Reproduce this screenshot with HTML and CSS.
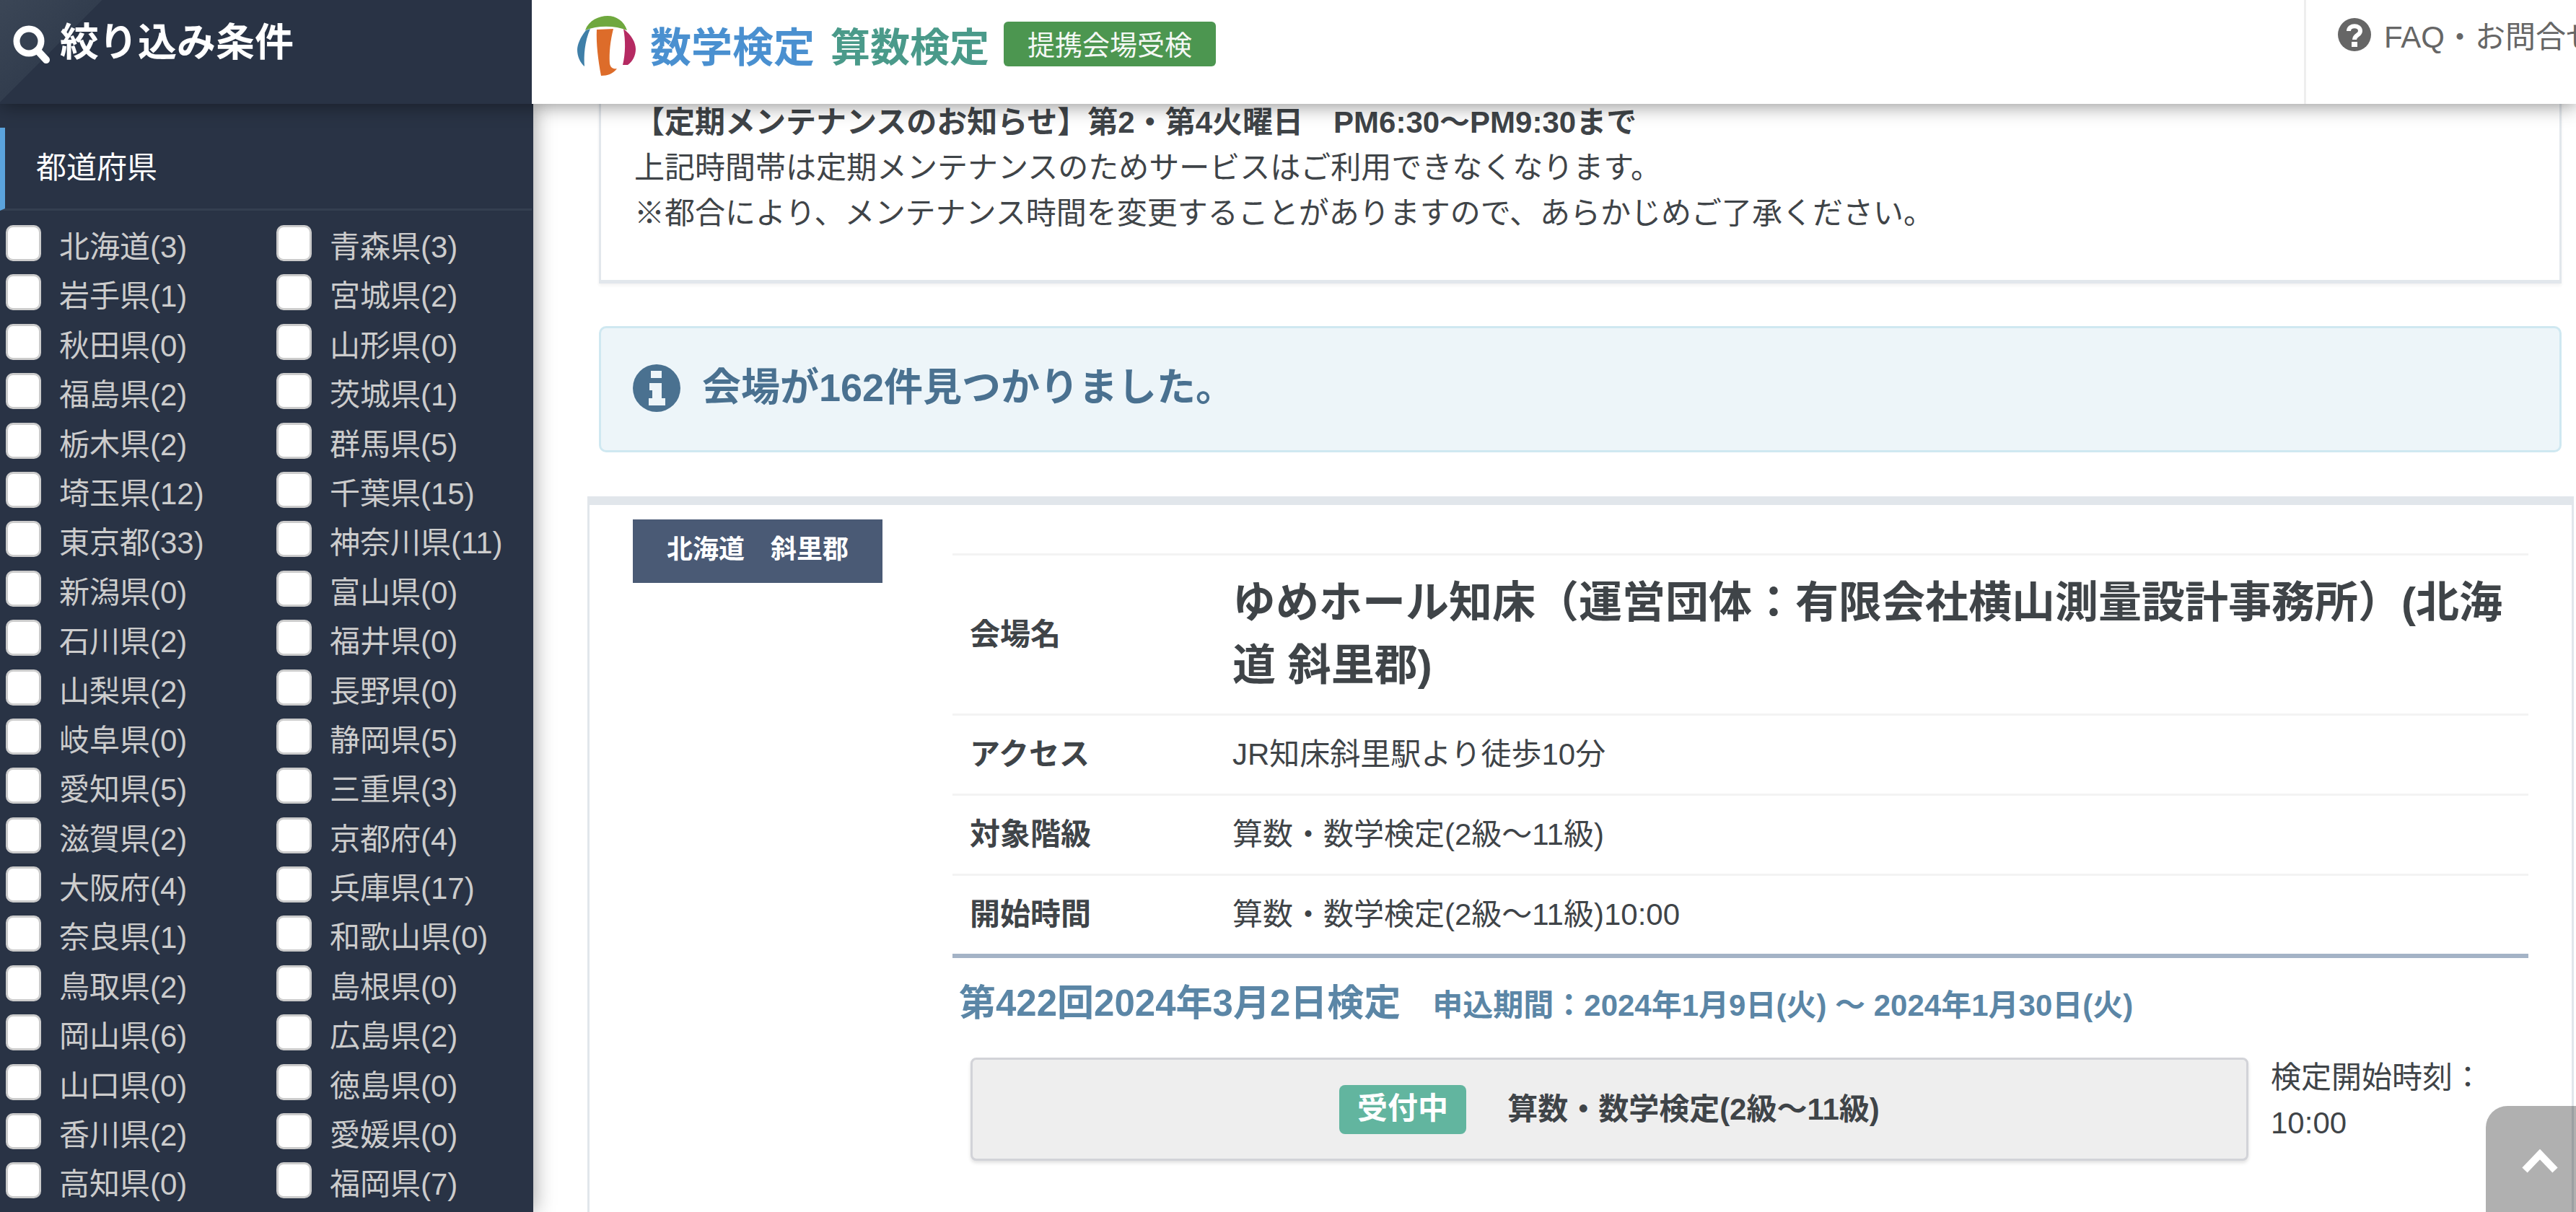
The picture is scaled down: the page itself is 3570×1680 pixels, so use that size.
FILE: index.html
```html
<!DOCTYPE html>
<html lang="ja">
  <head>
    <meta charset="UTF-8" />
    <title>提携会場受検</title>
    <link rel="stylesheet" href="styles.css">
  </head>
  <body>
    <header class="topbar">
      <div class="filter-title">
        <svg class="search-icon" viewBox="0 0 52 53"><circle cx="22" cy="22" r="17" fill="none" stroke="#fff" stroke-width="9"/><path d="M34 35 L46 48" stroke="#fff" stroke-width="10" stroke-linecap="round"/></svg>
        <span>絞り込み条件</span>
      </div>
      <div class="brand">
        <svg class="logo" viewBox="0 0 81 83">
          <path d="M11 20 C16 6 30 0 42 0 C54 0 65 7 69 20 C52 13 28 13 11 20 Z" fill="#6fa83e"/>
          <path d="M12 20 C4 30 0 40 0 47 C0 56 4 65 10 70 C9 55 10 36 18 18 Z" fill="#3f7fa8"/>
          <path d="M27 19 L50 18 C46 34 44 50 45 66 C46 72 50 74 55 73 C50 80 42 83 33 83 C29 62 26 38 27 19 Z" fill="#dd6c2a"/>
          <path d="M64 18 C75 26 81 37 81 46 C81 55 77 63 70 68 L63 68 C67 52 67 34 64 18 Z" fill="#b52a62"/>
        </svg>
        <span class="brand-math">数学検定</span>
        <span class="brand-arith">算数検定</span>
        <span class="brand-badge">提携会場受検</span>
      </div>
      <a class="faq-link" href="#">
        <svg class="faq-icon" viewBox="0 0 46 46"><circle cx="23" cy="23" r="23" fill="#666"/><path d="M15 18 C15 9 31 9 31 18 C31 24 23 23 23 30" fill="none" stroke="#fff" stroke-width="6"/><rect x="19" y="33" width="8" height="7" fill="#fff"/></svg>
        <span>FAQ・お問合せ</span>
      </a>
    </header>

    <div class="layout">
      <aside class="sidebar">
        <h2 class="filter-heading">都道府県</h2>
        <div class="pref-grid">
          <label class="pref"><input type="checkbox"><span>北海道(3)</span></label>
          <label class="pref"><input type="checkbox"><span>青森県(3)</span></label>
          <label class="pref"><input type="checkbox"><span>岩手県(1)</span></label>
          <label class="pref"><input type="checkbox"><span>宮城県(2)</span></label>
          <label class="pref"><input type="checkbox"><span>秋田県(0)</span></label>
          <label class="pref"><input type="checkbox"><span>山形県(0)</span></label>
          <label class="pref"><input type="checkbox"><span>福島県(2)</span></label>
          <label class="pref"><input type="checkbox"><span>茨城県(1)</span></label>
          <label class="pref"><input type="checkbox"><span>栃木県(2)</span></label>
          <label class="pref"><input type="checkbox"><span>群馬県(5)</span></label>
          <label class="pref"><input type="checkbox"><span>埼玉県(12)</span></label>
          <label class="pref"><input type="checkbox"><span>千葉県(15)</span></label>
          <label class="pref"><input type="checkbox"><span>東京都(33)</span></label>
          <label class="pref"><input type="checkbox"><span>神奈川県(11)</span></label>
          <label class="pref"><input type="checkbox"><span>新潟県(0)</span></label>
          <label class="pref"><input type="checkbox"><span>富山県(0)</span></label>
          <label class="pref"><input type="checkbox"><span>石川県(2)</span></label>
          <label class="pref"><input type="checkbox"><span>福井県(0)</span></label>
          <label class="pref"><input type="checkbox"><span>山梨県(2)</span></label>
          <label class="pref"><input type="checkbox"><span>長野県(0)</span></label>
          <label class="pref"><input type="checkbox"><span>岐阜県(0)</span></label>
          <label class="pref"><input type="checkbox"><span>静岡県(5)</span></label>
          <label class="pref"><input type="checkbox"><span>愛知県(5)</span></label>
          <label class="pref"><input type="checkbox"><span>三重県(3)</span></label>
          <label class="pref"><input type="checkbox"><span>滋賀県(2)</span></label>
          <label class="pref"><input type="checkbox"><span>京都府(4)</span></label>
          <label class="pref"><input type="checkbox"><span>大阪府(4)</span></label>
          <label class="pref"><input type="checkbox"><span>兵庫県(17)</span></label>
          <label class="pref"><input type="checkbox"><span>奈良県(1)</span></label>
          <label class="pref"><input type="checkbox"><span>和歌山県(0)</span></label>
          <label class="pref"><input type="checkbox"><span>鳥取県(2)</span></label>
          <label class="pref"><input type="checkbox"><span>島根県(0)</span></label>
          <label class="pref"><input type="checkbox"><span>岡山県(6)</span></label>
          <label class="pref"><input type="checkbox"><span>広島県(2)</span></label>
          <label class="pref"><input type="checkbox"><span>山口県(0)</span></label>
          <label class="pref"><input type="checkbox"><span>徳島県(0)</span></label>
          <label class="pref"><input type="checkbox"><span>香川県(2)</span></label>
          <label class="pref"><input type="checkbox"><span>愛媛県(0)</span></label>
          <label class="pref"><input type="checkbox"><span>高知県(0)</span></label>
          <label class="pref"><input type="checkbox"><span>福岡県(7)</span></label>
        </div>
      </aside>

      <main class="content">
        <section class="notice">
          <p class="notice-title">【定期メンテナンスのお知らせ】第2・第4火曜日　PM6:30～PM9:30まで</p>
          <p>上記時間帯は定期メンテナンスのためサービスはご利用できなくなります。</p>
          <p>※都合により、メンテナンス時間を変更することがありますので、あらかじめご了承ください。</p>
        </section>

        <div class="alert">
          <svg class="info-icon" viewBox="0 0 66 66"><circle cx="33" cy="33" r="33" fill="#4a7190"/><rect x="25" y="9" width="15" height="10" fill="#edf5f9"/><path d="M23 26 H40 V47 H45 V57 H22 V47 H27 V36 H23 Z" fill="#edf5f9"/></svg>
          <span>会場が162件見つかりました。</span>
        </div>

        <article class="venue">
          <div class="venue-pref">北海道　斜里郡</div>
          <div class="venue-body">
            <table class="venue-table">
              <tr>
                <th>会場名</th>
                <td class="venue-name">ゆめホール知床（運営団体：有限会社横山測量設計事務所）(北海道 斜里郡)</td>
              </tr>
              <tr>
                <th>アクセス</th>
                <td>JR知床斜里駅より徒歩10分</td>
              </tr>
              <tr>
                <th>対象階級</th>
                <td>算数・数学検定(2級～11級)</td>
              </tr>
              <tr>
                <th>開始時間</th>
                <td>算数・数学検定(2級～11級)10:00</td>
              </tr>
            </table>
            <div class="exam-head">
              <h3>第422回2024年3月2日検定</h3>
              <span>申込期間：2024年1月9日(火) 〜 2024年1月30日(火)</span>
            </div>
            <div class="exam-row">
              <div class="exam-box">
                <span class="status">受付中</span>
                <span class="exam-label">算数・数学検定(2級～11級)</span>
              </div>
              <div class="exam-time">検定開始時刻：<br>10:00</div>
            </div>
          </div>
        </article>
      </main>
    </div>

    <a class="page-top" href="#">
      <svg viewBox="0 0 54 36"><path d="M6 30 L27 8 L48 30" fill="none" stroke="#fff" stroke-width="10" stroke-linejoin="miter"/></svg>
    </a>
  </body>
</html>
```

FILE: styles.css
```css
html,
body {
  margin: 0;
  padding: 0;
  height: 1680px;
  overflow: hidden;
}

body {
  display: flex;
  flex-direction: column;
  font-family: "Liberation Sans", "Noto Sans CJK JP", sans-serif;
  font-size: 42px;
  line-height: 63px;
  color: #3f4448;
  background-color: #fff;
}

p,
h2,
h3 {
  margin: 0;
}

/* header */
.topbar {
  position: relative;
  z-index: 3;
  flex: none;
  display: flex;
  height: 144px;
  background-color: #fff;
  box-shadow: 0 2px 26px rgba(0, 0, 0, 0.45);
  overflow: hidden;
}

.filter-title {
  flex: none;
  display: flex;
  align-items: flex-start;
  gap: 13px;
  width: 719px;
  height: 118px;
  padding: 26px 0 0 18px;
  color: #fff;
  font-size: 54px;
  font-weight: bold;
  line-height: 66px;
  background: linear-gradient(135deg, #3b4656 0, #323d4e 100px, #293345 100px);
}

.search-icon {
  width: 52px;
  height: 53px;
  margin-top: 9px;
}

.brand {
  flex: none;
  display: flex;
  align-items: flex-start;
  width: 2456px;
  padding: 22px 0 0 63px;
  box-sizing: border-box;
  font-family: "Noto Sans CJK JP", sans-serif;
  font-weight: 700;
}

.logo {
  width: 81px;
  height: 83px;
  margin-right: 20px;
}

.brand-math,
.brand-arith {
  line-height: 80px;
  margin-top: -1px;
  white-space: nowrap;
}

.brand-math {
  color: #4a90d0;
  font-size: 57px;
  margin-right: 22px;
}

.brand-arith {
  color: #4a9a8a;
  font-size: 55px;
  margin-right: 20px;
}

.brand-badge {
  width: 294px;
  height: 62px;
  margin-top: 8px;
  border-radius: 6px;
  background-color: #4c9650;
  color: #f4f8f4;
  font-size: 38px;
  font-weight: 400;
  line-height: 60px;
  text-align: center;
}

.faq-link {
  flex: none;
  display: flex;
  align-items: flex-start;
  gap: 18px;
  width: 377px;
  padding: 25px 0 0 44px;
  box-sizing: border-box;
  border-left: 3px solid #eee;
  color: #666;
  font-size: 42px;
  line-height: 54px;
  text-decoration: none;
  white-space: nowrap;
}

.faq-icon {
  flex: none;
  width: 46px;
  height: 46px;
}

/* page body */
.layout {
  flex: 1;
  display: flex;
  min-height: 0;
}

.sidebar {
  position: relative;
  z-index: 2;
  flex: none;
  width: 739px;
  padding-top: 33px;
  box-sizing: border-box;
  background-color: #293345;
  box-shadow: 0 0 28px rgba(0, 0, 0, 0.4);
}

.filter-heading {
  height: 112px;
  padding-left: 43px;
  border-left: 7px solid #5ba3dc;
  border-bottom: 3px solid #343f50;
  color: #fff;
  font-size: 42px;
  font-weight: normal;
  line-height: 112px;
  margin-right: 2px;
}

.pref-grid {
  display: grid;
  grid-template-columns: 375px 1fr;
  grid-auto-rows: 68.4px;
  padding: 20px 0 0 8px;
}

.pref {
  display: flex;
  align-items: flex-start;
  gap: 25px;
  color: #ccc;
  white-space: nowrap;
}

.pref input {
  appearance: none;
  flex: none;
  width: 49px;
  height: 50px;
  margin: 0;
  box-sizing: border-box;
  background-color: #fff;
  border: 3px solid #ccc;
  border-radius: 10px;
}

.pref span {
  margin-top: -1px;
}

.content {
  flex: 1;
  display: flex;
  flex-direction: column;
  min-width: 0;
  padding: 0 20px 0 91px;
}

.notice {
  flex: none;
  margin-top: -6px;
  padding: 0 0 61px 46px;
  border: 0 solid #e2e7ec;
  border-width: 0 3px 5px 3px;
  box-shadow: 0 3px 4px rgba(0, 0, 0, 0.05);
  white-space: nowrap;
}

.notice-title {
  font-weight: bold;
}

.alert {
  flex: none;
  display: flex;
  align-items: center;
  gap: 30px;
  height: 175px;
  margin-top: 59px;
  padding: 0 0 4px 44px;
  box-sizing: border-box;
  background-color: #edf5f9;
  border: 3px solid #cfe8f1;
  border-radius: 10px;
  color: #4a7190;
  font-size: 54px;
  font-weight: bold;
}

.info-icon {
  flex: none;
  width: 66px;
  height: 66px;
}

.venue {
  flex: 1;
  display: flex;
  align-items: flex-start;
  gap: 97px;
  margin: 61px -17px 0 -16px;
  padding: 20px 60px 0 60px;
  border: 0 solid #e1e6eb;
  border-width: 12px 3px 0 3px;
}

.venue-pref {
  flex: none;
  width: 346px;
  height: 88px;
  background-color: #4a5a75;
  color: #fff;
  font-size: 36px;
  font-weight: bold;
  line-height: 84px;
  text-align: center;
}

.venue-body {
  flex: 1;
  min-width: 0;
  margin-top: 47px;
}

.venue-table {
  width: 100%;
  border-collapse: collapse;
  border-top: 3px solid #f3f3f3;
  border-bottom: 6px solid #a4b3c6;
}

.venue-table tr + tr {
  border-top: 3px solid #f3f3f3;
}

.venue-table th {
  width: 364px;
  padding: 22px 0 23px 24px;
  font-weight: bold;
  text-align: left;
  vertical-align: middle;
}

.venue-table td {
  padding: 22px 0 23px;
}

.venue-table .venue-name {
  padding-right: 10px;
  font-size: 60px;
  font-weight: bold;
  line-height: 87px;
}

.exam-head {
  display: flex;
  align-items: baseline;
  gap: 44px;
  margin-top: 28px;
  padding-left: 9px;
  color: #5b86a6;
  font-weight: bold;
  line-height: 70px;
  white-space: nowrap;
}

.exam-head h3 {
  font-size: 51px;
}

.exam-row {
  display: flex;
  gap: 31px;
  margin-top: 37px;
  margin-left: 25px;
}

.exam-box {
  flex: none;
  display: flex;
  align-items: center;
  justify-content: center;
  gap: 57px;
  width: 1771px;
  height: 143px;
  box-sizing: border-box;
  background-color: #eee;
  border: 3px solid #d2d3d8;
  border-radius: 8px;
  box-shadow: 0 3px 5px rgba(0, 0, 0, 0.12);
}

.status {
  width: 176px;
  height: 68px;
  border-radius: 8px;
  background-color: #62b59f;
  color: #fff;
  font-weight: bold;
  line-height: 66px;
  text-align: center;
}

.exam-label {
  font-weight: bold;
}

.exam-time {
  margin-top: -4px;
  white-space: nowrap;
}

.page-top {
  position: absolute;
  right: 0;
  bottom: 0;
  z-index: 4;
  display: flex;
  justify-content: flex-end;
  width: 125px;
  height: 147px;
  padding: 59px 23px 0 0;
  box-sizing: border-box;
  border-radius: 30px 0 0 0;
  background-color: rgba(0, 0, 0, 0.31);
}

.page-top svg {
  width: 54px;
  height: 36px;
}
```
